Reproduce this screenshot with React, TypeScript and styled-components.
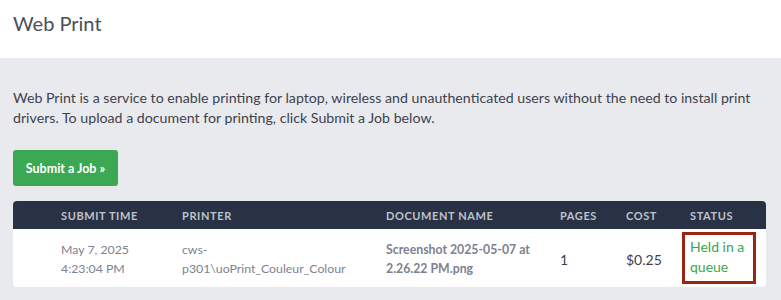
import React from "react";
import styled, { createGlobalStyle } from "styled-components";

const Global = createGlobalStyle`
  html, body { margin: 0; padding: 0; background: #e9eaee; }
  body { font-family: Lato, "Open Sans", sans-serif; -webkit-font-smoothing: antialiased; }
`;

const Header = styled.header`
  background: #ffffff;
  height: 58px;
  display: flex;
  align-items: center;
  padding: 0 13px;
  box-sizing: border-box;
`;

const Title = styled.h1`
  margin: 0;
  font-size: 20px;
  font-weight: 400;
  color: #4a4e5a;
  padding-bottom: 12px;
`;

const Main = styled.main`
  padding: 30px 15px 0 13px;
`;

const Intro = styled.p`
  margin: 0;
  font-size: 14.2px;
  line-height: 20px;
  color: #3e424d;
`;

const Button = styled.button`
  margin-top: 22px;
  height: 36px;
  width: 105px;
  border: none;
  border-radius: 3px;
  background: #3ba853;
  color: #fff;
  font-family: inherit;
  font-size: 12.5px;
  font-weight: 700;
  padding: 0;
  cursor: pointer;
`;

const Table = styled.div`
  margin-top: 15px;
  width: 753px;
  border-radius: 4px;
  overflow: hidden;
  background: #fff;
`;

const cols = "48px 121px 204px 174px 66px 56px 1fr";

const HeadRow = styled.div`
  display: grid;
  grid-template-columns: ${cols};
  height: 28px;
  align-items: center;
  background: #283244;
`;

const HeadCell = styled.div<{ $inset?: boolean }>`
  font-size: 11px;
  font-weight: 700;
  letter-spacing: 0.6px;
  text-transform: uppercase;
  color: #bfc3cb;
  padding-left: ${(p) => (p.$inset ? "8px" : "0")};
`;

const BodyRow = styled.div`
  display: grid;
  grid-template-columns: ${cols};
  height: 58px;
  align-items: center;
`;

const Cell = styled.div<{ $bold?: boolean; $dark?: boolean }>`
  line-height: 19px;
  color: ${(p) => (p.$dark ? "#3e424d" : "#7d8290")};
  font-weight: ${(p) => (p.$bold ? 700 : 400)};
  font-size: ${(p) => (p.$dark ? "14px" : "12.3px")};
  padding-top: 2px;
`;

const StatusBox = styled.div`
  border: 3px solid #9b2411;
  width: 74px;
  height: 52px;
  box-sizing: border-box;
  padding: 2px 0 0 5px;
  color: #3aa64c;
  font-size: 14px;
  line-height: 20px;
`;

export default function App() {
  return (
    <>
      <Global />
      <Header>
        <Title>Web Print</Title>
      </Header>
      <Main>
        <Intro>
          Web Print is a service to enable printing for laptop, wireless and unauthenticated users without the need to install print drivers. To upload a document for printing, click Submit a Job below.
        </Intro>
        <Button>Submit a Job »</Button>
        <Table>
          <HeadRow>
            <span />
            <HeadCell>Submit Time</HeadCell>
            <HeadCell>Printer</HeadCell>
            <HeadCell>Document Name</HeadCell>
            <HeadCell>Pages</HeadCell>
            <HeadCell>Cost</HeadCell>
            <HeadCell $inset>Status</HeadCell>
          </HeadRow>
          <BodyRow>
            <span />
            <Cell>May 7, 2025<br />4:23:04 PM</Cell>
            <Cell>cws-<br />p301\uoPrint_Couleur_Colour</Cell>
            <Cell $bold>Screenshot 2025-05-07 at<br />2.26.22 PM.png</Cell>
            <Cell $dark>1</Cell>
            <Cell $dark>$0.25</Cell>
            <StatusBox>Held in a<br />queue</StatusBox>
          </BodyRow>
        </Table>
      </Main>
    </>
  );
}
